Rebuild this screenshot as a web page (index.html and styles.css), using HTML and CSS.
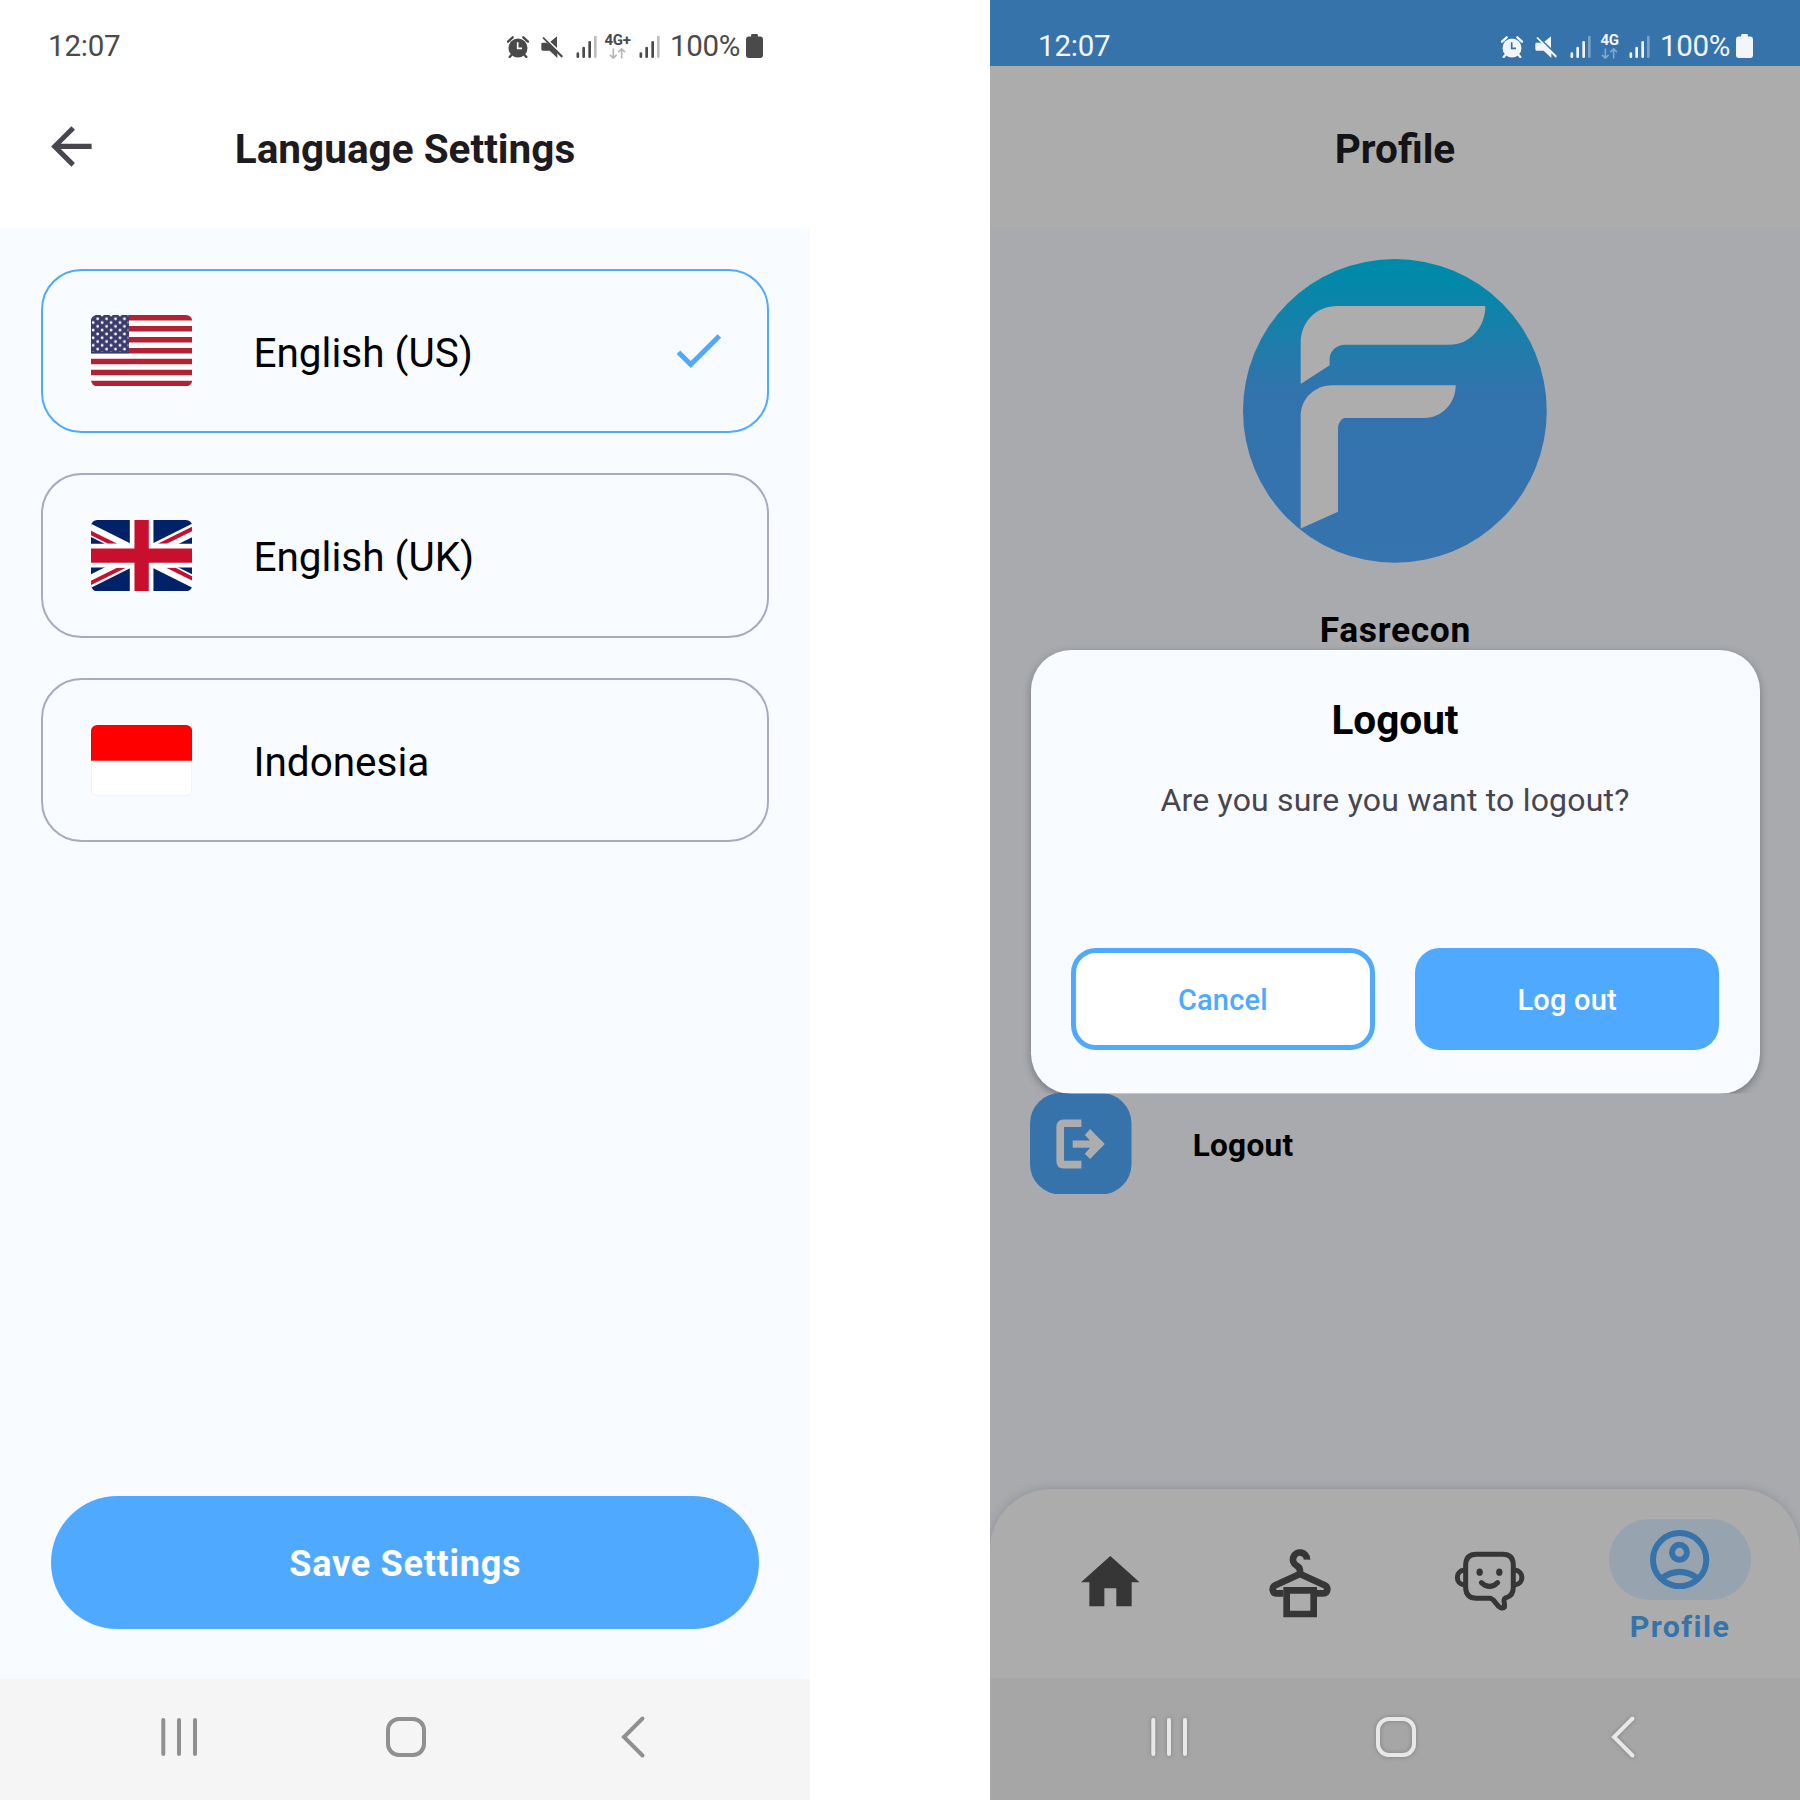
FILE: index.html
```html
<!DOCTYPE html>
<html lang="en">
<head>
<meta charset="utf-8">
<title>Language Settings and Logout</title>
<link rel="stylesheet" href="styles.css">
</head>
<body>
<svg class="defs" width="0" height="0" aria-hidden="true">
  <symbol id="alarm" viewBox="0 0 66 66">
    <circle cx="33" cy="36" r="28.500" fill="currentColor"/>
    <path d="M3 17L17 4M63 17L49 4M14 56L8 63M52 56L58 63" stroke="currentColor" stroke-width="7" stroke-linecap="round"/>
    <path class="clock-hands" d="M32 19V37H45" fill="none" stroke-width="5"/>
  </symbol>
  <symbol id="mute" viewBox="0 0 66 66">
    <path d="M1 24Q1 20 5 20H17L49 48V66L26 44H5Q1 44 1 40ZM28 17L48 1V36ZM4 6L8 3L66 60L62 65Z" fill="currentColor"/>
  </symbol>
  <symbol id="signal" viewBox="0 0 63 66">
    <path d="M5.500 53V62M23 36V62M41 19V62" stroke="currentColor" stroke-width="8" stroke-linecap="round"/>
    <path d="M58 3V62" stroke="currentColor" stroke-width="8" stroke-linecap="round" opacity=".36"/>
  </symbol>
  <symbol id="data" viewBox="0 0 51 32">
    <path d="M13 1V30M3 20L13 30L23 20M38 31V2M28 12L38 2L48 12" fill="none" stroke="currentColor" stroke-width="5" opacity=".4"/>
  </symbol>
  <symbol id="battery" viewBox="0 0 50 70">
    <path d="M15 7V3Q15 0 18 0H32Q35 0 35 3V7H43Q50 8 50 15V63Q50 70 43 70H7Q0 70 0 63V15Q0 8 7 7Z" fill="currentColor"/>
  </symbol>
  <symbol id="recents" viewBox="0 0 42 46">
    <path d="M5.300 6V40M21 6V40M37 6V40" stroke="currentColor" stroke-width="4" stroke-linecap="round"/>
  </symbol>
  <symbol id="home-key" viewBox="0 0 46 46">
    <rect x="5" y="5" width="36" height="36" rx="11" fill="none" stroke="currentColor" stroke-width="4"/>
  </symbol>
  <symbol id="back-key" viewBox="0 0 30 46">
    <path d="M24.500 4.500L6 23L24.500 41.500" fill="none" stroke="currentColor" stroke-width="4" stroke-linecap="round"/>
  </symbol>
</svg>

<main class="stage">
  <section class="phone phone-light">
    <div class="status">
      <span class="time">12:07</span>
      <div class="status-icons">
        <svg class="i-alarm"><use href="#alarm"/></svg>
        <svg class="i-mute"><use href="#mute"/></svg>
        <svg class="i-signal"><use href="#signal"/></svg>
        <span class="net"><b>4G+</b><svg><use href="#data"/></svg></span>
        <svg class="i-signal"><use href="#signal"/></svg>
        <span class="percent">100%</span>
        <svg class="i-battery"><use href="#battery"/></svg>
      </div>
    </div>
    <header class="appbar">
      <svg class="back" viewBox="0 0 24 24"><path d="M20 11H7.830l5.590-5.590L12 4l-8 8 8 8 1.410-1.410L7.830 13H20z" fill="#49454f"/></svg>
      <h1>Language Settings</h1>
    </header>
    <div class="content">
      <div class="card selected">
        <svg class="flag" viewBox="0 0 304 214">
          <defs>
            <clipPath id="fc"><rect width="304" height="214" rx="19"/></clipPath>
            <pattern id="stars" width="26.800" height="22.800" patternUnits="userSpaceOnUse">
              <circle cx="20" cy="11.500" r="4.200" fill="#fff"/><circle cx="6.600" cy="22.800" r="4.200" fill="#fff"/><circle cx="6.600" cy="0" r="4.200" fill="#fff"/>
            </pattern>
          </defs>
          <g clip-path="url(#fc)">
            <path fill="#fff" d="M0 0H304V214H0z"/>
            <path stroke="#b22234" stroke-width="16.460" d="M0 8.200H304M0 41.200H304M0 74.100H304M0 107H304M0 139.900H304M0 172.900H304M0 205.800H304"/>
            <path fill="#3c3b6e" d="M0 0H114V115H0z"/>
            <path fill="url(#stars)" d="M0 0H112V110H0z"/>
          </g>
        </svg>
        <span class="lang">English (US)</span>
        <svg class="check" viewBox="0 0 24 24"><path d="M9 16.170L4.830 12l-1.420 1.410L9 19 21 7l-1.410-1.410z" fill="#4faaff"/></svg>
      </div>
      <div class="card">
        <svg class="flag" viewBox="0 0 304 214">
          <g clip-path="url(#fc)">
            <path fill="#012169" d="M0 0H304V214H0z"/>
            <path stroke="#fff" stroke-width="36" d="M-62 0L366 214M366 0L-62 214"/>
            <path fill="#c8102e" d="M0 32L79 71H51L0 46zM304 20L200 71H227L304 33zM0 182L78 143H105L0 195zM226 143H254L304 169V182z"/>
            <path stroke="#fff" stroke-width="71" d="M152 0V214M0 107H304"/>
            <path stroke="#c8102e" stroke-width="43" d="M152 0V214M0 107H304"/>
          </g>
        </svg>
        <span class="lang">English (UK)</span>
      </div>
      <div class="card">
        <svg class="flag" viewBox="0 0 304 214">
          <g clip-path="url(#fc)">
            <path fill="#fff" d="M0 0H304V214H0z"/>
            <path fill="#f00" d="M0 0H304V107H0z"/>
          </g>
          <rect x="1.500" y="1.500" width="301" height="211" rx="18" fill="none" stroke="#000" stroke-opacity=".07" stroke-width="3"/>
        </svg>
        <span class="lang">Indonesia</span>
      </div>
      <div class="save">Save Settings</div>
    </div>
    <nav class="keys">
      <svg class="k-recents"><use href="#recents"/></svg>
      <svg class="k-home"><use href="#home-key"/></svg>
      <svg class="k-back"><use href="#back-key"/></svg>
    </nav>
  </section>

  <section class="phone phone-dim">
    <div class="status">
      <span class="time">12:07</span>
      <div class="status-icons">
        <svg class="i-alarm"><use href="#alarm"/></svg>
        <svg class="i-mute"><use href="#mute"/></svg>
        <svg class="i-signal"><use href="#signal"/></svg>
        <span class="net"><b>4G</b><svg><use href="#data"/></svg></span>
        <svg class="i-signal"><use href="#signal"/></svg>
        <span class="percent">100%</span>
        <svg class="i-battery"><use href="#battery"/></svg>
      </div>
    </div>
    <header class="appbar"><h1>Profile</h1></header>
    <div class="content">
      <svg class="avatar" viewBox="71 57 911 911">
        <defs>
          <linearGradient id="lg" x1="0" y1="0" x2="0" y2="1">
            <stop offset=".05" stop-color="#008aa9"/><stop offset=".44" stop-color="#3373ad"/><stop offset="1" stop-color="#3673af"/>
          </linearGradient>
        </defs>
        <circle cx="526.500" cy="512.500" r="455.500" fill="url(#lg)"/>
        <path fill="#adadad" d="M244 432V310C244 245 290 198 355 198H798C798 262 752 314 690 314H378C350 314 331 335 331 355V376ZM244 865V530C244 476 285 436 340 436H709C709 490 668 534 615 534H374C362 540 356 552 356 568V815Z"/>
      </svg>
      <h2 class="name">Fasrecon</h2>
      <div class="row">
        <svg class="row-icon" viewBox="151 68 304 304">
          <rect x="151" y="68" width="304" height="304" rx="91" fill="#3673ab"/>
          <path fill="#adadad" d="M305 147H252Q230 147 230 170V272Q230 294 252 294H305V271H253V170H305ZM279 210H331L315 194L331 176L375 220.500L331 266L315 250L331 232H279Z"/>
        </svg>
        <span>Logout</span>
      </div>
    </div>
    <nav class="tabs">
      <div class="tab">
        <svg class="t-home" viewBox="303 259 176 151"><path fill="#363636" d="M391 259L479 338H455V410H409V356H373V410H328V338H303Z"/></svg>
      </div>
      <div class="tab">
        <svg class="t-hanger" viewBox="867 235 186 207">
          <g fill="none" stroke="#363636" stroke-width="20">
            <path d="M981 267A21 21 0 1 0 950 285Q960 290 960 300V310"/>
            <path d="M910 368H890C876 368 874 350 886 344L960 310L1034 344C1046 350 1044 368 1030 368H1011"/>
            <path d="M920 359H1001V430H920Z"/>
          </g>
        </svg>
      </div>
      <div class="tab">
        <svg class="t-chat" viewBox="163 243 214 180">
          <g fill="none" stroke="#363636" stroke-width="15" stroke-linecap="round" stroke-linejoin="round">
            <path d="M231 253H309Q341 253 341 286V352Q341 377 320 383Q313 385 313 393Q316 407 314 412Q311 416 301 412C288 405 284 385 270 385H231Q198 385 198 352V286Q198 253 231 253Z"/>
            <path d="M194 300C166 302 166 343 194 345M345 300C374 302 374 343 345 345M245 338Q270 361 294 338"/>
          </g>
          <ellipse cx="240" cy="306.500" rx="9.500" ry="11" fill="#363636"/><ellipse cx="299" cy="306.500" rx="9.500" ry="11" fill="#363636"/>
        </svg>
      </div>
      <div class="tab active">
        <div class="pill">
          <svg class="t-profile" viewBox="750 179 178 178">
            <g fill="none" stroke="#3673ab" stroke-width="18">
              <circle cx="839" cy="268" r="80"/><circle cx="838.500" cy="246" r="22.500"/><path d="M783 325Q839 284 895 325"/>
            </g>
          </svg>
        </div>
        <span>Profile</span>
      </div>
    </nav>
    <nav class="keys">
      <svg class="k-recents"><use href="#recents"/></svg>
      <svg class="k-home"><use href="#home-key"/></svg>
      <svg class="k-back"><use href="#back-key"/></svg>
    </nav>
    <div class="dialog">
      <h2>Logout</h2>
      <p>Are you sure you want to logout?</p>
      <div class="actions">
        <div class="btn outline">Cancel</div>
        <div class="btn solid">Log out</div>
      </div>
    </div>
  </section>
</main>
</body>
</html>
```
FILE: styles.css
```css
* { box-sizing: border-box; }
body { margin: 0; background: #fff; font-family: Roboto, "Liberation Sans", sans-serif; color: #000; }
h1, h2, p { margin: 0; }
svg { display: block; flex: none; }
.defs { position: absolute; }
.stage { display: flex; justify-content: space-between; width: 1800px; height: 1800px; overflow: hidden; }
.phone { --bar: #fff; position: relative; display: flex; flex-direction: column; width: 810px; height: 1800px; }

.status { display: flex; justify-content: space-between; height: 66px; padding: 26px 47.500px 0 48px; color: #4a4a4a; font-size: 29.500px; line-height: 41px; }
.time { letter-spacing: -.2px; }
.status-icons { display: flex; align-items: flex-start; }
.status-icons svg { margin-top: 9.500px; }
.clock-hands { stroke: var(--bar); }
.i-alarm, .i-mute { width: 22px; height: 22px; }
.i-mute { margin-left: 12px; }
.i-signal { width: 21px; height: 22px; margin-left: 13px; }
.net { display: flex; flex-direction: column; align-items: center; width: 24px; margin-left: 9px; }
.net + .i-signal { margin-left: 9.500px; }
.net b { margin-top: 6px; font-size: 15px; line-height: 17px; letter-spacing: -.3px; }
.status-icons .net svg { width: 17px; height: 11px; margin-top: -1.500px; }
.percent { width: 75.500px; margin-left: 10px; letter-spacing: -.3px; white-space: nowrap; }
.status-icons .i-battery { width: 17px; height: 24px; margin-top: 8px; }

.appbar { display: grid; grid-template-columns: 1fr auto 1fr; align-items: center; height: 162px; padding: 0 40.500px 1px 40.500px; color: #1d1b20; }
.appbar h1 { grid-column: 2; margin-top: 4px; font-size: 40.500px; line-height: 48px; font-weight: 700; }
.back { width: 60.750px; height: 60.750px; }

.content { flex: 1; display: flex; flex-direction: column; background: #f8fbff; }
.phone-light .content { gap: 40.500px; padding: 40.500px 41px 50px 40.500px; }
.card { display: flex; align-items: center; height: 164.300px; padding: 0 38px 0 48.500px; border: 2.500px solid #a9a9c2; border-radius: 40.500px; }
.card.selected { border-color: #4faaff; }
.flag { width: 101.250px; height: 71.300px; }
.lang { margin: 4px 0 0 61.200px; font-size: 40.500px; line-height: 48px; }
.check { width: 60.750px; height: 60.750px; margin-left: auto; }
.save { height: 133px; margin: auto 10px 0; border-radius: 67px; background: #4faaff; color: #fff; font-size: 36px; font-weight: 700; line-height: 136px; letter-spacing: .75px; text-indent: 1px; text-align: center; }

.keys { display: flex; align-items: center; height: 121.500px; padding: 0 160px 4px 158px; background: #f5f5f5; color: #909090; }
.k-recents { width: 42px; height: 46px; }
.k-home { width: 46px; height: 46px; margin-left: 182.500px; }
.k-back { width: 30px; height: 46px; margin-left: 189.500px; }

.phone-dim { --bar: #3673ab; background: #a8aaae; }
.phone-dim .status { background: #3673ab; color: #f2f6fc; }
.phone-dim .net { width: 20px; }
.phone-dim .appbar { background: #acacac; color: #141316; }
.phone-dim .content { align-items: center; background: #a8aaae; padding: 31px 39.500px 0 40.200px; }
.avatar { width: 303.750px; height: 303.750px; }
.name { margin-top: 46px; font-size: 35.400px; line-height: 42px; font-weight: 700; letter-spacing: .65px; }
.row { display: flex; align-items: center; align-self: stretch; margin-top: 442px; font-size: 31.600px; font-weight: 700; line-height: 40px; letter-spacing: .25px; }
.row span { margin: 5px 0 0 61px; }
.row-icon { width: 101.500px; height: 101.500px; }

.tabs { display: flex; height: 189.700px; padding: 0 25px; border-radius: 61px 61px 0 0; background: #acacac; box-shadow: 0 -1px 8px rgba(60, 70, 85, .22); clip-path: inset(-20px 0 0 0); }
.tab { flex: 1; display: flex; flex-direction: column; align-items: center; color: #3673ab; }
.t-home { width: 58.700px; height: 50.300px; margin-top: 67.600px; }
.t-hanger { width: 62px; height: 69px; margin-top: 60px; }
.t-chat { width: 71.300px; height: 60px; margin-top: 62.300px; }
.pill { display: flex; align-items: center; justify-content: center; width: 142px; height: 81.300px; margin-top: 30.300px; border-radius: 41px; background: #98a3b0; }
.t-profile { width: 59.300px; height: 59.300px; }
.tab span { margin-top: 8.500px; font-size: 30.400px; font-weight: 700; line-height: 36px; letter-spacing: 1.400px; }
.phone-dim .keys { background: #a6a6a6; color: #e8e8e8; }
.phone-dim .keys svg { filter: drop-shadow(0 0 2px rgba(90, 90, 90, .5)); }

.dialog { position: absolute; left: 40.500px; top: 650px; width: 729px; height: 443.500px; padding: 47px 40.500px 44px; display: flex; flex-direction: column; align-items: center; border-radius: 40.500px; background: #f8fbff; box-shadow: 0 3px 8px rgba(0, 0, 0, .3); clip-path: inset(-10px -10px 0 -10px); }
.dialog h2 { font-size: 40.500px; line-height: 46px; font-weight: 700; }
.dialog p { margin-top: 36.500px; color: #49454f; font-size: 32px; line-height: 40px; letter-spacing: .2px; }
.actions { display: flex; gap: 40.500px; align-self: stretch; margin-top: auto; }
.btn { flex: 1; height: 102px; border: 5px solid #4faaff; border-radius: 25px; font-size: 29px; font-weight: 500; line-height: 95px; letter-spacing: .2px; text-align: center; }
.outline { background: #fff; color: #4faaff; }
.solid { background: #4faaff; color: #fff; }
```
